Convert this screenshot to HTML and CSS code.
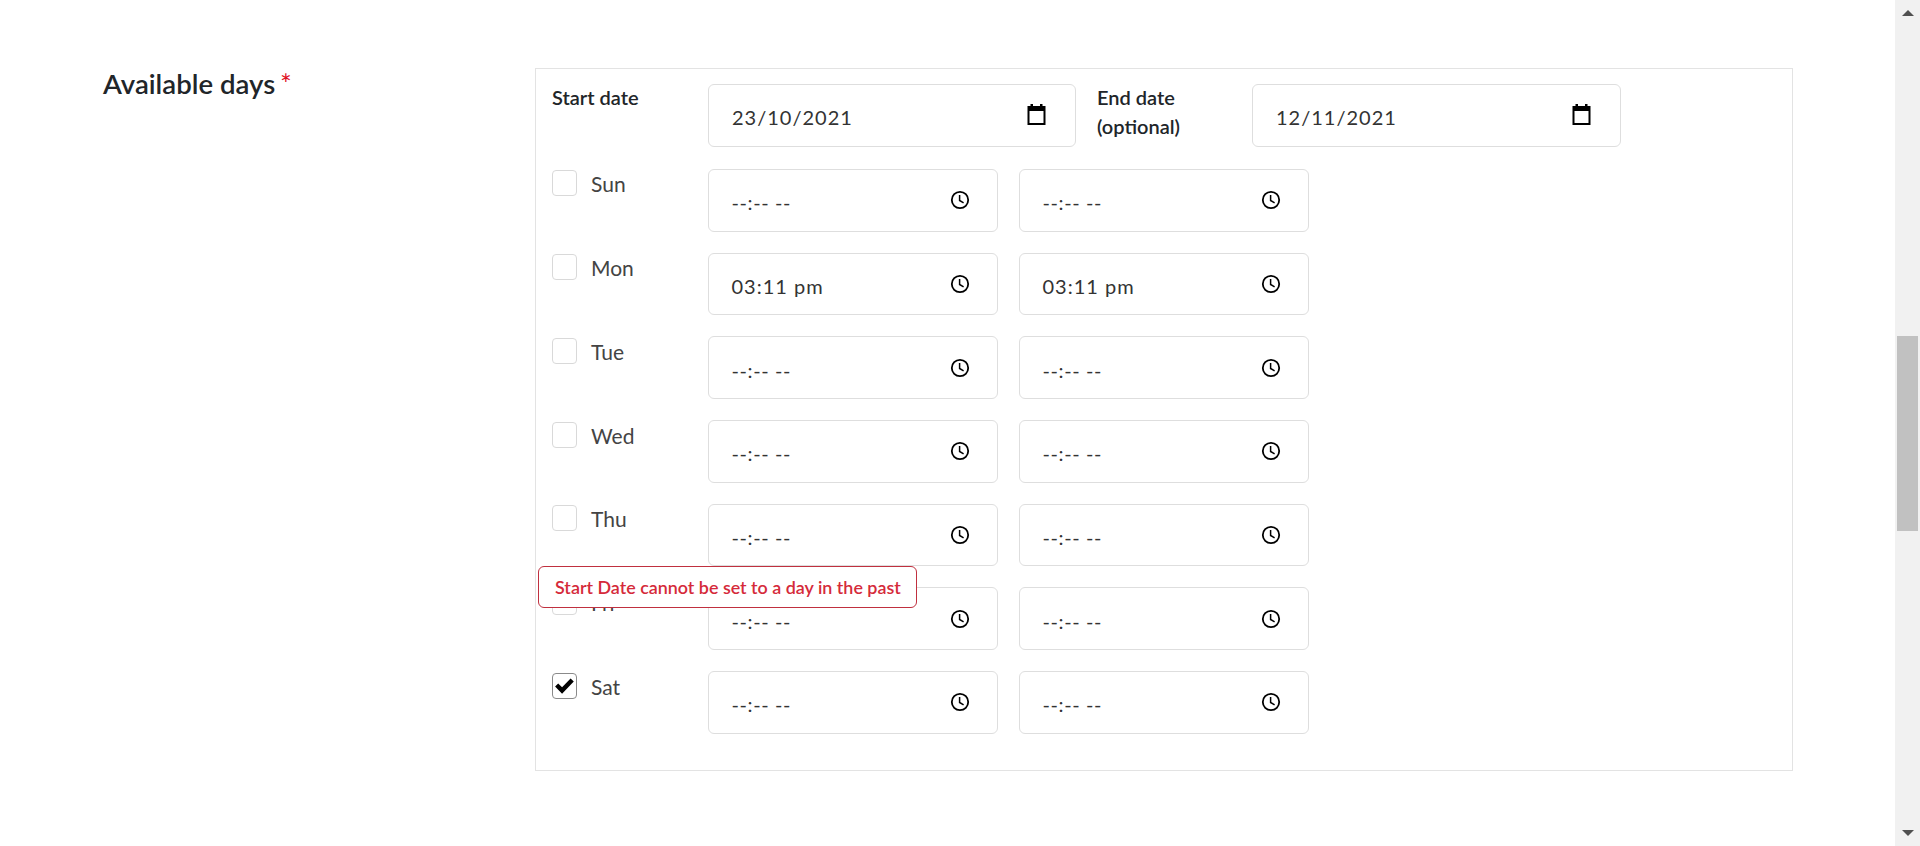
FILE: index.html
```html
<!DOCTYPE html>
<html lang="en">

<head>
    <meta charset="UTF-8" />
    <meta name="viewport" content="width=device-width, initial-scale=1.0" />
    <title>Available days</title>
    <link rel="stylesheet" href="styles.css">
</head>

<body>
    <svg class="defs" width="0" height="0">
        <symbol id="calendar" viewBox="0 0 18 22">
            <path d="M3 1h2.500v2h7V1H15v2h3v19H0V3h3z M2 8v12h14V8z" fill-rule="evenodd" />
        </symbol>
        <symbol id="clock" viewBox="0 0 20 20">
            <circle cx="10" cy="10" r="8.200" fill="none" stroke="currentColor" stroke-width="1.800" />
            <path d="M9.600 5v5.500l4 2.300" fill="none" stroke="currentColor" stroke-width="1.500" />
        </symbol>
    </svg>

    <main class="page">
        <h2 class="section-title">Available days <span class="required">*</span></h2>

        <div class="panel">
            <div class="date-row">
                <div class="date-label">Start date</div>
                <div class="field date-field">
                    <span class="field-value">23/10/2021</span>
                    <svg class="icon-calendar"><use href="#calendar" /></svg>
                </div>
                <div class="date-label end-label">End date<br />(optional)</div>
                <div class="field date-field end-field">
                    <span class="field-value">12/11/2021</span>
                    <svg class="icon-calendar"><use href="#calendar" /></svg>
                </div>
            </div>

            <div class="day-row">
                <div class="day"><span class="check"></span><span class="day-name">Sun</span></div>
                <div class="field time-field"><span class="field-value empty">--:-- --</span><svg class="icon-clock"><use href="#clock" /></svg></div>
                <div class="field time-field"><span class="field-value empty">--:-- --</span><svg class="icon-clock"><use href="#clock" /></svg></div>
            </div>
            <div class="day-row">
                <div class="day"><span class="check"></span><span class="day-name">Mon</span></div>
                <div class="field time-field"><span class="field-value">03:11 pm</span><svg class="icon-clock"><use href="#clock" /></svg></div>
                <div class="field time-field"><span class="field-value">03:11 pm</span><svg class="icon-clock"><use href="#clock" /></svg></div>
            </div>
            <div class="day-row">
                <div class="day"><span class="check"></span><span class="day-name">Tue</span></div>
                <div class="field time-field"><span class="field-value empty">--:-- --</span><svg class="icon-clock"><use href="#clock" /></svg></div>
                <div class="field time-field"><span class="field-value empty">--:-- --</span><svg class="icon-clock"><use href="#clock" /></svg></div>
            </div>
            <div class="day-row">
                <div class="day"><span class="check"></span><span class="day-name">Wed</span></div>
                <div class="field time-field"><span class="field-value empty">--:-- --</span><svg class="icon-clock"><use href="#clock" /></svg></div>
                <div class="field time-field"><span class="field-value empty">--:-- --</span><svg class="icon-clock"><use href="#clock" /></svg></div>
            </div>
            <div class="day-row">
                <div class="day"><span class="check"></span><span class="day-name">Thu</span></div>
                <div class="field time-field"><span class="field-value empty">--:-- --</span><svg class="icon-clock"><use href="#clock" /></svg></div>
                <div class="field time-field"><span class="field-value empty">--:-- --</span><svg class="icon-clock"><use href="#clock" /></svg></div>
            </div>
            <div class="day-row">
                <div class="day"><span class="check"></span><span class="day-name">Fri</span></div>
                <div class="field time-field"><span class="field-value empty">--:-- --</span><svg class="icon-clock"><use href="#clock" /></svg></div>
                <div class="field time-field"><span class="field-value empty">--:-- --</span><svg class="icon-clock"><use href="#clock" /></svg></div>
            </div>
            <div class="day-row">
                <div class="day">
                    <span class="check checked">
                        <svg width="21" height="18" viewBox="0 0 19 16"><path d="M1 8.500l2.800-2.800 3.500 3.500L15 1.200l2.900 2.800L7.300 15z" /></svg>
                    </span>
                    <span class="day-name">Sat</span>
                </div>
                <div class="field time-field"><span class="field-value empty">--:-- --</span><svg class="icon-clock"><use href="#clock" /></svg></div>
                <div class="field time-field"><span class="field-value empty">--:-- --</span><svg class="icon-clock"><use href="#clock" /></svg></div>
            </div>

            <div class="error-tip">Start Date cannot be set to a day in the past</div>
        </div>
    </main>

    <div class="scrollbar">
        <div class="arrow arrow-up"></div>
        <div class="track"><div class="thumb"></div></div>
        <div class="arrow arrow-down"></div>
    </div>
</body>

</html>
```

FILE: styles.css
```css
body {
    font-family: "Lato", "Liberation Sans", sans-serif;
    margin: 0;
    padding: 0;
    height: 846px;
    overflow: hidden;
    display: flex;
    background: white;
    color: #212529;
}

.defs {
    display: none;
}

.page {
    flex: 1;
    display: flex;
    align-items: flex-start;
    padding: 68px 0 0 103px;
}

.section-title {
    width: 432px;
    margin: 0;
    font-size: 27.600px;
    line-height: 32px;
    font-weight: 600;
}

.required {
    margin-left: -2px;
    color: #e0101f;
    font-weight: 400;
}

.panel {
    position: relative;
    width: 1258px;
    height: 703px;
    box-sizing: border-box;
    padding: 15px 16px 0;
    border: 1px solid #e3e3e3;
}

.date-row {
    display: flex;
    margin-bottom: 22.300px;
}

.date-label {
    width: 156px;
    margin-top: -1px;
    font-size: 20px;
    line-height: 29px;
    font-weight: 600;
}

.end-label {
    width: 155px;
    margin-left: 21px;
}

.field {
    box-sizing: border-box;
    height: 62.700px;
    display: flex;
    align-items: center;
    justify-content: space-between;
    border: 1px solid #dedede;
    border-radius: 6px;
    font-size: 20px;
    letter-spacing: 1px;
    color: #333;
}

.date-field {
    width: 368px;
    padding: 4px 29px 0 23px;
}

.end-field {
    width: 369px;
}

.time-field {
    width: 290px;
    margin-right: 21px;
    padding: 4px 27px 0 22.500px;
}

.field-value.empty {
    letter-spacing: 0.600px;
}

.icon-calendar {
    width: 19px;
    height: 22px;
    margin-top: -7px;
    fill: black;
}

.icon-clock {
    width: 20px;
    height: 20px;
    margin-top: -4px;
    color: black;
}

.day-row {
    display: flex;
    margin-bottom: 21px;
}

.day {
    width: 156px;
    display: flex;
    align-items: center;
    height: 29px;
}

.check {
    box-sizing: border-box;
    width: 25px;
    height: 26px;
    margin-right: 14px;
    display: flex;
    align-items: center;
    justify-content: center;
    border: 1px solid #d9d9d9;
    border-radius: 4px;
    background: white;
}

.check.checked {
    border-color: #8a8a8a;
}

.day-name {
    margin-top: 1px;
    font-size: 21px;
    color: #444;
}

.error-tip {
    position: absolute;
    top: 497px;
    left: 2px;
    box-sizing: border-box;
    width: 379px;
    height: 42px;
    line-height: 40px;
    padding-left: 16px;
    background: white;
    border: 1px solid #c0303f;
    border-radius: 6px;
    color: #d52a3a;
    font-size: 17.900px;
    font-weight: 600;
    white-space: nowrap;
}

.scrollbar {
    width: 25px;
    display: flex;
    flex-direction: column;
    background: #f1f1f1;
}

.arrow {
    height: 25px;
    display: flex;
    justify-content: center;
}

.arrow-up::before,
.arrow-down::before {
    content: "";
    width: 0;
    height: 0;
    border-left: 6px solid transparent;
    border-right: 6px solid transparent;
}

.arrow-up::before {
    margin-top: 10px;
    border-bottom: 6px solid #505050;
}

.arrow-down::before {
    margin-top: 9px;
    border-top: 6px solid #505050;
}

.track {
    flex: 1;
    padding: 311px 2px 0;
}

.thumb {
    height: 195px;
    background: #c1c1c1;
}
```
